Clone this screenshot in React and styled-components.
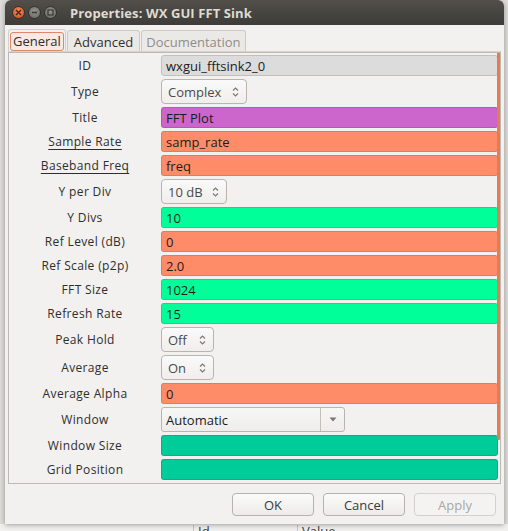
import React from 'react';
import styled, { createGlobalStyle } from 'styled-components';

const Global = createGlobalStyle`
  html, body { margin: 0; padding: 0; }
  body {
    width: 508px; height: 531px; overflow: hidden;
    background: #dddcd8;
    font-family: "Open Sans", "DejaVu Sans", sans-serif;
  }
`;

const Screen = styled.div`
  display: flex; flex-direction: column;
  width: 508px; height: 531px; overflow: hidden;
`;

const Window = styled.div`
  margin-left: 5px; width: 499px; height: 524px; flex-shrink: 0;
  display: flex; flex-direction: column;
  background: #f2f1f0;
  border-radius: 6px 6px 0 0;
  box-shadow: 0 1px 5px rgba(0,0,0,0.35);
  overflow: hidden;
  position: relative; z-index: 1;
`;

const TitleBar = styled.div`
  height: 25px; flex-shrink: 0;
  display: flex; align-items: center;
  padding-left: 7px; gap: 3px;
  background: linear-gradient(#524f4a, #3d3c38);
`;

const WinBtn = styled.div`
  width: 13px; height: 13px; border-radius: 50%;
  box-sizing: border-box;
  display: flex; align-items: center; justify-content: center;
  border: 1px solid #35342f;
  background: ${p => p.$close
    ? 'radial-gradient(circle at 50% 40%, #f7905e, #e15a25 70%, #c8451a)'
    : 'radial-gradient(circle at 50% 40%, #95938e, #75736e 70%, #615f5a)'};
`;

const Title = styled.div`
  margin-left: 10px;
  color: #dfdbd2;
  font-weight: bold; font-size: 13px;
  letter-spacing: 0.1px;
`;

const Body = styled.div`
  flex: 1; display: flex; flex-direction: column;
  padding: 4px 3px 0 3px;
`;

const TabBar = styled.div`
  display: flex; align-items: flex-end; height: 23px;
  gap: 1px;
`;

const Tab = styled.div`
  height: ${p => (p.$active ? 23 : 22)}px; box-sizing: border-box;
  display: flex; align-items: center; justify-content: center;
  padding: 0 ${p => (p.$active ? 1 : p.$dim ? 4 : 6)}px;
  font-size: 13px;
  color: ${p => (p.$dim ? '#8e8d89' : '#2f2f2f')};
  background: ${p => (p.$active ? '#f2f1f0' : '#ebe9e6')};
  border: 1px solid ${p => (p.$active ? '#d3d0cb' : '#cdcac4')};
  border-bottom: none;
  border-radius: 3px 3px 0 0;
`;

const Focus = styled.span`
  display: block; padding: 0 2px; line-height: 17px;
  border: 1px solid #e0866a; border-radius: 3px;
  background: #fbe8e1;
`;

const Frame = styled.div`
  position: relative;
  height: 432px; box-sizing: border-box;
  border: 1px solid #bdbab4;
  box-shadow: 0 -1px 0 #d6d3ce;
  overflow: hidden;
  padding: 2px 2px 0 0;
`;

const Grid = styled.div`
  display: grid;
  grid-template-columns: 152px 1fr;
  row-gap: 3px;
  align-items: center;
`;

const Label = styled.div`
  text-align: center;
  font-size: 12px;
  color: #2e2e2e;
  letter-spacing: 0.35px;
  text-decoration: ${p => (p.$under ? 'underline' : 'none')};
  text-underline-offset: 3px;
  text-decoration-thickness: 1px;
`;

const Entry = styled.div`
  height: 21px; box-sizing: border-box;
  display: flex; align-items: center;
  padding-left: 4px;
  font-size: 13px; color: #1c1c1c;
  background: ${p => p.$bg};
  border: 1px solid ${p => p.$border || 'rgba(0,0,0,0.12)'};
  border-radius: 3px;
`;

const Combo = styled.div`
  width: ${p => p.$w}px; height: 25px; box-sizing: border-box;
  display: flex; align-items: center; justify-content: space-between;
  padding: 0 7px 0 6px;
  font-size: 13px; color: #4a4a4a;
  background: linear-gradient(#fafafa, #efeeec);
  border: 1px solid #b9b5ae;
  border-radius: 4px;
`;

const Dropdown = styled.div`
  width: 184px; height: 25px; box-sizing: border-box;
  display: flex; align-items: stretch;
  font-size: 13px; color: #1c1c1c;
  background: linear-gradient(#f7f7f6, #eeedeb);
  border: 1px solid #b9b5ae;
  border-radius: 3px;
`;

const DropText = styled.div`
  flex: 1; display: flex; align-items: center; padding-left: 4px;
  border-right: 1px solid #c3bfb9;
`;

const DropBtn = styled.div`
  width: 23px; display: flex; align-items: center; justify-content: center;
`;

const Scroll = styled.div`
  position: absolute; left: 488px; top: 0;
  width: 3px; height: 387px;
  background: #e57b52;
  border-radius: 0 0 1px 1px;
`;

const Actions = styled.div`
  flex: 1;
  display: flex; justify-content: flex-end; align-items: flex-start;
  gap: 9px;
  padding: 9px 5px 0 0;
`;

const Button = styled.div`
  width: 82px; height: 23px; box-sizing: border-box;
  display: flex; align-items: center; justify-content: center;
  font-size: 13px;
  color: ${p => (p.$disabled ? '#a9a8a5' : '#3a3a3a')};
  background: ${p => (p.$disabled ? '#f4f3f2' : 'linear-gradient(#fbfbfb, #ecebe9)')};
  border: 1px solid ${p => (p.$disabled ? '#d4d1cc' : '#b7b3ac')};
  border-radius: 4px;
`;

const Behind = styled.div`
  flex: 1; display: flex;
  padding-left: 193px;
  background: #f1f0ee;
  overflow: hidden;
`;

const HeadCell = styled.div`
  width: ${p => p.$w}px;
  border-left: 1px solid #c7c4be;
  padding: 0 0 0 4px;
  font-size: 13px; line-height: 13px;
  color: #3a3a3a;
  margin-top: 1px;
`;

const Spin = () => (
  <svg width="7" height="12" viewBox="0 0 7 12">
    <path d="M1 4.5 L3.5 2 L6 4.5" fill="none" stroke="#7a7a7a" strokeWidth="1.2" />
    <path d="M1 7.5 L3.5 10 L6 7.5" fill="none" stroke="#7a7a7a" strokeWidth="1.2" />
  </svg>
);

const rows = [
  { label: 'ID', kind: 'entry', value: 'wxgui_fftsink2_0', bg: '#dcdcdc', border: '#c2c0bc' },
  { label: 'Type', kind: 'combo', value: 'Complex', w: 86 },
  { label: 'Title', kind: 'entry', value: 'FFT Plot', bg: '#cc66cc' },
  { label: 'Sample Rate', kind: 'entry', value: 'samp_rate', bg: '#ff8c69', under: true },
  { label: 'Baseband Freq', kind: 'entry', value: 'freq', bg: '#ff8c69', under: true },
  { label: 'Y per Div', kind: 'combo', value: '10 dB', w: 66 },
  { label: 'Y Divs', kind: 'entry', value: '10', bg: '#00ff99' },
  { label: 'Ref Level (dB)', kind: 'entry', value: '0', bg: '#ff8c69' },
  { label: 'Ref Scale (p2p)', kind: 'entry', value: '2.0', bg: '#ff8c69' },
  { label: 'FFT Size', kind: 'entry', value: '1024', bg: '#00ff99' },
  { label: 'Refresh Rate', kind: 'entry', value: '15', bg: '#00ff99' },
  { label: 'Peak Hold', kind: 'combo', value: 'Off', w: 53 },
  { label: 'Average', kind: 'combo', value: 'On', w: 53 },
  { label: 'Average Alpha', kind: 'entry', value: '0', bg: '#ff8c69' },
  { label: 'Window', kind: 'drop', value: 'Automatic' },
  { label: 'Window Size', kind: 'entry', value: '', bg: '#00cc99' },
  { label: 'Grid Position', kind: 'entry', value: '', bg: '#00cc99' },
];

function Field({ row }) {
  if (row.kind === 'combo') {
    return (
      <div>
        <Combo $w={row.w}>
          <span>{row.value}</span>
          <Spin />
        </Combo>
      </div>
    );
  }
  if (row.kind === 'drop') {
    return (
      <div>
        <Dropdown>
          <DropText>{row.value}</DropText>
          <DropBtn>
            <svg width="8" height="5" viewBox="0 0 8 5">
              <path d="M0.5 0.5 L7.5 0.5 L4 4.5 Z" fill="#777" />
            </svg>
          </DropBtn>
        </Dropdown>
      </div>
    );
  }
  return <Entry $bg={row.bg} $border={row.border}>{row.value}</Entry>;
}

export default function App() {
  return (
    <>
      <Global />
      <Screen>
        <Window>
          <TitleBar>
            <WinBtn $close>
              <svg width="7" height="7" viewBox="0 0 7 7">
                <path d="M1 1 L6 6 M6 1 L1 6" stroke="#3a2a22" strokeWidth="1.4" />
              </svg>
            </WinBtn>
            <WinBtn>
              <svg width="7" height="7" viewBox="0 0 7 7">
                <path d="M1 3.5 L6 3.5" stroke="#3a3935" strokeWidth="1.6" />
              </svg>
            </WinBtn>
            <WinBtn>
              <svg width="7" height="7" viewBox="0 0 7 7">
                <rect x="1" y="1" width="5" height="5" fill="none" stroke="#3a3935" strokeWidth="1.2" />
              </svg>
            </WinBtn>
            <Title>Properties: WX GUI FFT Sink</Title>
          </TitleBar>
          <Body>
            <TabBar>
              <Tab $active><Focus>General</Focus></Tab>
              <Tab>Advanced</Tab>
              <Tab $dim>Documentation</Tab>
            </TabBar>
            <Frame>
              <Grid>
                {rows.map(r => (
                  <React.Fragment key={r.label}>
                    <Label $under={r.under}>{r.label}</Label>
                    <Field row={r} />
                  </React.Fragment>
                ))}
              </Grid>
              <Scroll />
            </Frame>
            <Actions>
              <Button>OK</Button>
              <Button>Cancel</Button>
              <Button $disabled>Apply</Button>
            </Actions>
          </Body>
        </Window>
        <Behind>
          <HeadCell $w={99}>Id</HeadCell>
          <HeadCell $w={150}>Value</HeadCell>
        </Behind>
      </Screen>
    </>
  );
}
